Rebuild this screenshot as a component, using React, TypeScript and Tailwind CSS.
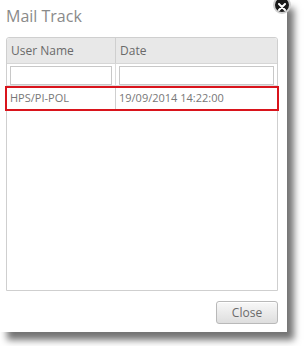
import React from "react";

export default function App() {
  return (
    <div className="relative h-[346px] w-[306px] overflow-hidden bg-white" style={{ fontFamily: "'Open Sans', 'Noto Sans', sans-serif" }}>
      {/* dialog */}
      <div className="flex h-[332px] w-[287px] flex-col bg-white shadow-[7px_8px_7px_rgba(0,0,0,0.55)]">
        <h1 className="px-[6px] pt-[4px] text-[16px] font-normal leading-[24px] text-[#8a8a8a]">Mail Track</h1>

        {/* grid */}
        <div className="ml-[6px] mt-[9px] flex h-[254px] w-[272px] flex-col rounded-t-[3px] border border-[#cfcfcf]">
          <div className="flex h-[26px] rounded-t-[3px] border-b border-[#d6d6d6] bg-[#e8e8e8] text-[12px] text-[#6a6a6a]">
            <div className="flex w-[109px] items-center border-r border-[#cfcfcf] pl-[4px]">User Name</div>
            <div className="flex flex-1 items-center pl-[4px]">Date</div>
          </div>
          <div className="flex h-[22px] border-b border-[#e0e0e0]">
            <div className="w-[109px] border-r border-[#dcdcdc] px-[3px] pt-[2px]">
              <div className="h-[19px] border border-[#c8c8c8] bg-white" />
            </div>
            <div className="flex-1 px-[3px] pt-[2px]">
              <div className="h-[19px] border border-[#c8c8c8] bg-white" />
            </div>
          </div>
          <div className="-ml-[2px] -mr-[2px] flex h-[25px] border-2 border-[#d9141c] text-[11px] text-[#777777]">
            <div className="flex w-[109px] items-center border-r border-[#cfcfcf] pl-[3px]">HPS/PI-POL</div>
            <div className="flex flex-1 items-center pl-[3px]">19/09/2014 14:22:00</div>
          </div>
          <div className="flex-1" />
        </div>

        <div className="flex justify-end pr-[9px] pt-[10px]">
          <button className="h-[23px] w-[62px] rounded-[3px] border border-[#b9b9b9] bg-gradient-to-b from-[#f8f8f8] to-[#dedede] text-[12px] text-[#6a6a6a] shadow-[inset_0_1px_0_#fff]">
            Close
          </button>
        </div>
      </div>

      {/* close badge */}
      <div className="absolute left-[273px] top-[-4px] flex h-[18px] w-[18px] items-center justify-center rounded-full border-2 border-[#d0d0d0] bg-[#1a1a1a]">
        <svg width="8" height="8" viewBox="0 0 8 8" className="mt-[3px]">
          <path d="M1 1L7 7M7 1L1 7" stroke="#fff" strokeWidth="2" strokeLinecap="round" />
        </svg>
      </div>
    </div>
  );
}
